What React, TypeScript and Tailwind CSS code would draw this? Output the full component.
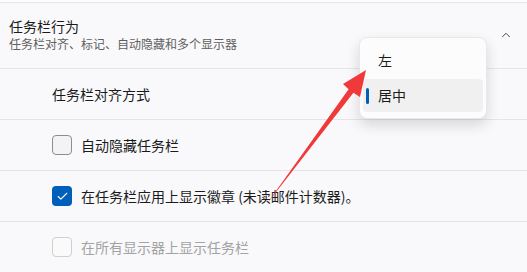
import { Check, ChevronUp } from 'lucide-react'

const font = { fontFamily: '"Noto Sans CJK SC", "Noto Sans", sans-serif' }

function CheckRow({ label, checked, disabled }: { label: string; checked?: boolean; disabled?: boolean }) {
  return (
    <div className="h-[51px] flex items-center pl-[52px] border-b border-[#e5e5e5]">
      {checked ? (
        <span className="w-5 h-5 rounded-[4px] bg-[#005fb8] flex items-center justify-center">
          <Check size={13} strokeWidth={2} className="text-white" />
        </span>
      ) : (
        <span
          className={
            disabled
              ? 'w-5 h-5 rounded-[4px] border border-[#d0d0d0] bg-[#fafafa]'
              : 'w-5 h-5 rounded-[4px] border border-[#8d8d8d] bg-[#f3f3f3]'
          }
        />
      )}
      <span className={'ml-[9px] text-[14px] ' + (disabled ? 'text-[#a3a3a3]' : 'text-[#1b1b1b]')}>{label}</span>
    </div>
  )
}

export default function App() {
  return (
    <div className="relative w-[527px] h-[272px] overflow-hidden bg-[#f9f9fb]" style={font}>
      <div className="h-[2px] bg-[#fcfcfc] border-b border-[#e6e6e6] box-content" />
      <div className="h-[66px] flex items-center justify-between pl-[9px] pr-[14px] border-b border-[#e5e5e5]">
        <div className="flex flex-col leading-none -mt-[2px]">
          <span className="text-[14px] text-[#1b1b1b]">任务栏行为</span>
          <span className="text-[12px] text-[#606060] mt-[5px]">任务栏对齐、标记、自动隐藏和多个显示器</span>
        </div>
        <ChevronUp size={14} strokeWidth={1.5} className="text-[#333] -mt-[2px]" />
      </div>
      <div className="h-[51px] flex items-center pl-[52px] border-b border-[#e5e5e5]">
        <span className="text-[14px] text-[#1b1b1b]">任务栏对齐方式</span>
      </div>
      <CheckRow label="自动隐藏任务栏" />
      <CheckRow label="在任务栏应用上显示徽章 (未读邮件计数器)。" checked />
      <CheckRow label="在所有显示器上显示任务栏" disabled />

      <div className="absolute left-[359px] top-[37px] w-[128px] h-[82px] rounded-[8px] bg-[#fcfcfc] border border-[#e8e8e8] shadow-[0_6px_14px_rgba(0,0,0,0.14)] p-[3px]">
        <div className="h-[38px] flex items-center pl-[15px] text-[14px] text-[#1b1b1b]">左</div>
        <div className="relative h-[33px] rounded-[4px] bg-[#f0f0f0] flex items-center pl-[15px] text-[14px] text-[#1b1b1b]">
          <span className="absolute left-[3px] top-[9px] w-[3px] h-[16px] rounded-full bg-[#005fb8]" />
          居中
        </div>
      </div>

      <svg className="absolute left-0 top-0" width="527" height="272">
        <polygon
          points="266,205 348.6,89.2 343,84 366,70 360,97 353.4,92.8"
          fill="#f03a3a"
        />
      </svg>
    </div>
  )
}
